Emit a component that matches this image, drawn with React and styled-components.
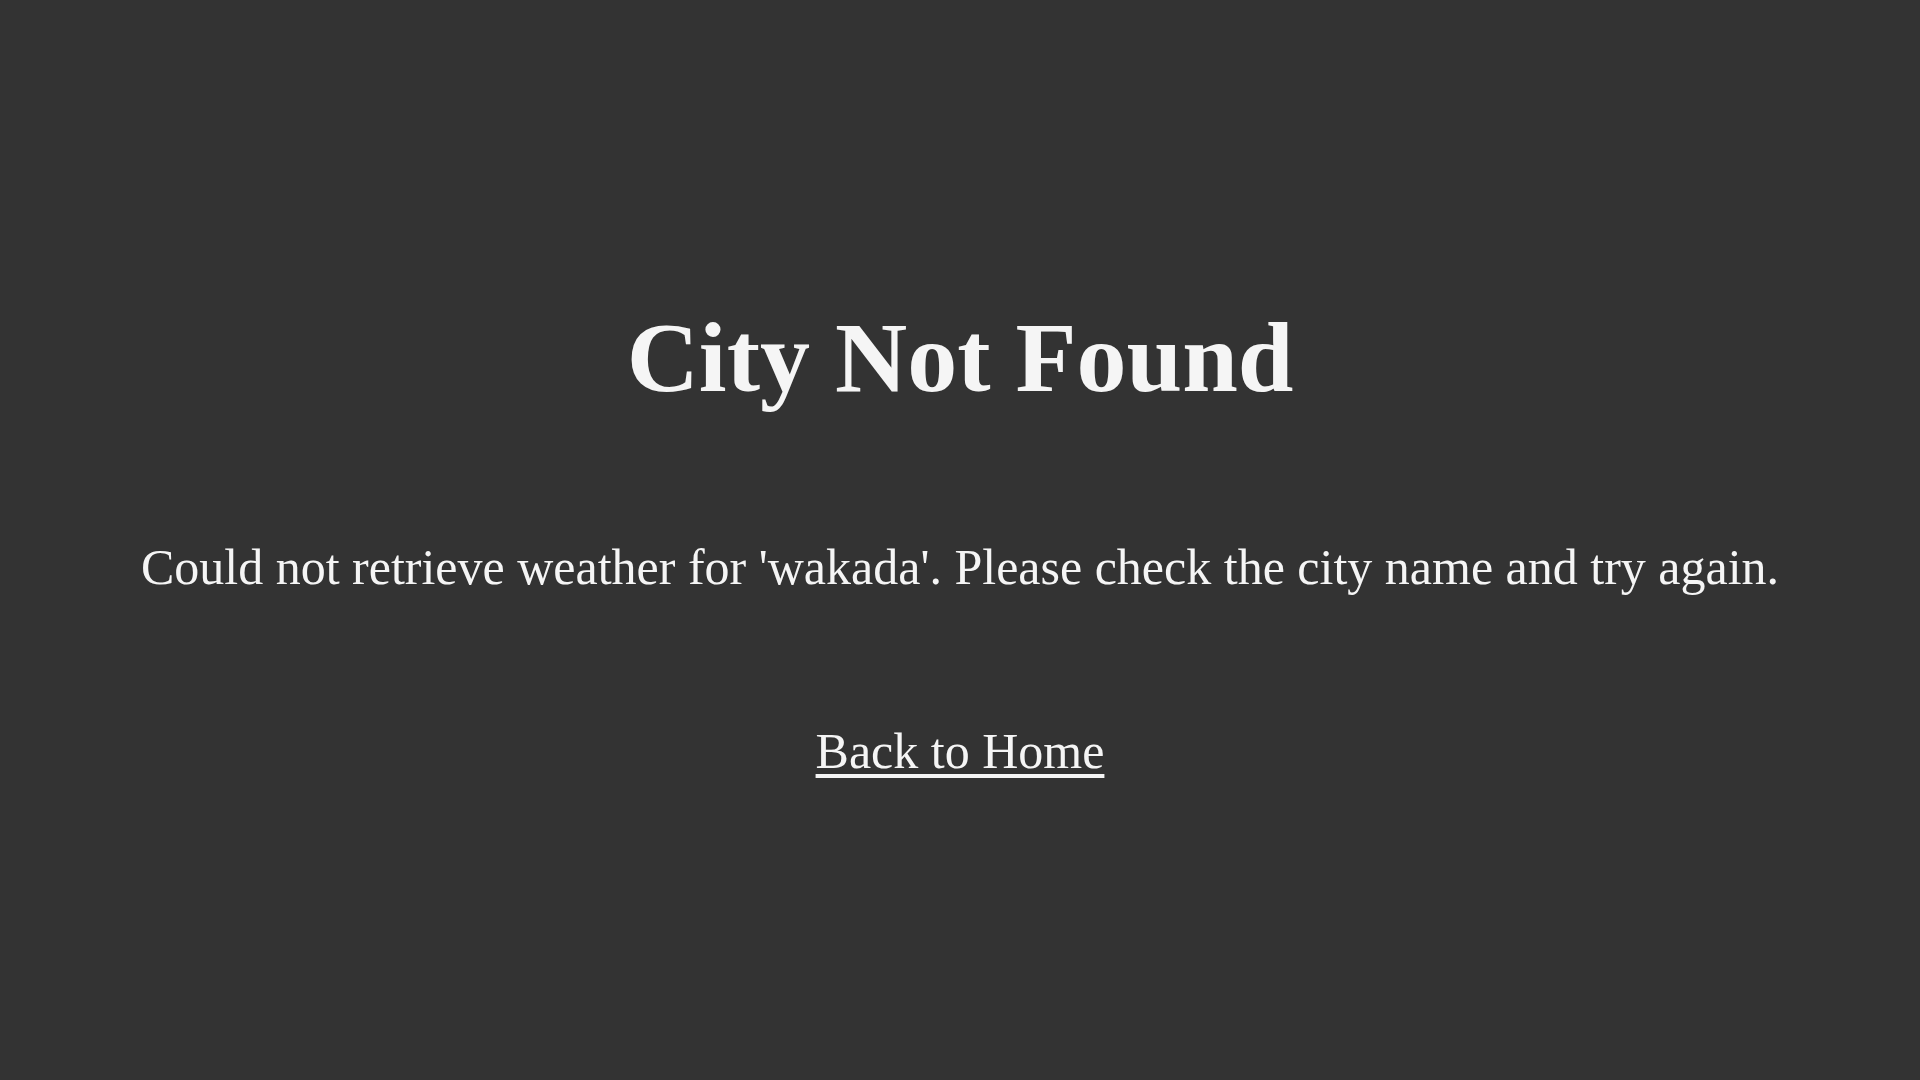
import React from "react";
import styled, { createGlobalStyle } from "styled-components";

const GlobalStyle = createGlobalStyle`
  html, body {
    margin: 0;
    padding: 0;
    height: 100%;
    background: #333333;
  }
  #root {
    height: 100%;
  }
`;

const Page = styled.main`
  height: 100vh;
  display: flex;
  flex-direction: column;
  align-items: center;
  justify-content: center;
  gap: 124px;
  background: #333333;
  color: #f5f5f5;
  font-family: "Liberation Serif", "Times New Roman", serif;
  text-align: center;
`;

const Title = styled.h1`
  margin: 0;
  font-size: 100px;
  font-weight: bold;
  line-height: 1.15;
`;

const Message = styled.p`
  margin: 0;
  font-size: 50px;
  line-height: 1.15;
`;

const HomeLink = styled.a`
  margin-top: 3px;
  font-size: 50px;
  line-height: 1.15;
  color: #f5f5f5;
  text-decoration: underline;
  text-decoration-thickness: 4px;
  text-underline-offset: 6px;
`;

export default function App() {
  return (
    <>
      <GlobalStyle />
      <Page>
        <Title>City Not Found</Title>
        <Message>
          Could not retrieve weather for 'wakada'. Please check the city name
          and try again.
        </Message>
        <HomeLink href="#">Back to Home</HomeLink>
      </Page>
    </>
  );
}
